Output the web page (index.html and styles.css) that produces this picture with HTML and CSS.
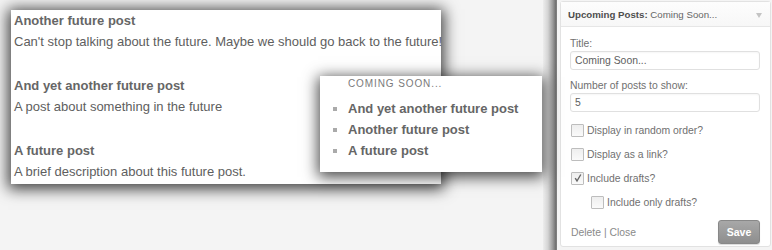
FILE: index.html
```html
<!DOCTYPE html>
<html>
<head>
<meta charset="utf-8">
<link rel="stylesheet" href="styles.css">
</head>
<body>
<div class="page">
  <div class="stage">
    <div class="posts">
      <div class="post">
        <div class="post-title">Another future post</div>
        <div class="post-desc">Can't stop talking about the future. Maybe we should go back to the future!</div>
      </div>
      <div class="post">
        <div class="post-title">And yet another future post</div>
        <div class="post-desc">A post about something in the future</div>
      </div>
      <div class="post">
        <div class="post-title">A future post</div>
        <div class="post-desc">A brief description about this future post.</div>
      </div>
    </div>
    <div class="soon">
      <div class="soon-head">COMING SOON...</div>
      <ul class="soon-list">
        <li>And yet another future post</li>
        <li>Another future post</li>
        <li>A future post</li>
      </ul>
    </div>
  </div>
  <div class="strip"></div>
  <div class="widget">
    <div class="widget-head">
      <span class="wh-text"><b>Upcoming Posts:</b> Coming Soon...</span>
      <span class="wh-arrow"></span>
    </div>
    <div class="widget-body">
      <div class="field-label">Title:</div>
      <div class="input">Coming Soon...</div>
      <div class="field-label second">Number of posts to show:</div>
      <div class="input">5</div>
      <div class="check-row first"><span class="cb"></span><span>Display in random order?</span></div>
      <div class="check-row"><span class="cb"></span><span>Display as a link?</span></div>
      <div class="check-row"><span class="cb checked"><svg width="10" height="10" viewBox="0 0 10 10"><path d="M2.2 5.2 L4 8 L7.8 1.5" fill="none" stroke="#666" stroke-width="1.4"/></svg></span><span>Include drafts?</span></div>
      <div class="check-row indent"><span class="cb"></span><span>Include only drafts?</span></div>
      <div class="footer">
        <span class="links">Delete | Close</span>
        <span class="save">Save</span>
      </div>
    </div>
  </div>
</div>
</body>
</html>
```
FILE: styles.css
```css
html, body {
  margin: 0;
  padding: 0;
}
body {
  background: #f4f4f4;
  font-family: "Liberation Sans", Arial, sans-serif;
  color: #555;
}
.page {
  display: flex;
  height: 250px;
  width: 772px;
  overflow: hidden;
  background: #f4f4f4;
}
.stage {
  position: relative;
  width: 543px;
  flex: none;
  padding: 10px 0 0 11px;
  box-sizing: border-box;
}
.posts {
  width: 430px;
  height: 174px;
  background: #fff;
  box-shadow: 0 2px 14px 3px rgba(0, 0, 0, 0.75);
  padding: 0 3px;
  box-sizing: border-box;
}
.post {
  margin-bottom: 23px;
}
.post-title {
  font-size: 13px;
  line-height: 21px;
  font-weight: bold;
  color: #666;
}
.post-desc {
  font-size: 13px;
  line-height: 21px;
  color: #5e5e5e;
  white-space: nowrap;
}
.soon {
  position: absolute;
  left: 320px;
  top: 76px;
  width: 222px;
  height: 96px;
  background: #fff;
  box-shadow: 0 3px 14px 2px rgba(0, 0, 0, 0.72);
  padding: 2px 0 0 28px;
  box-sizing: border-box;
}
.soon-head {
  font-size: 10px;
  line-height: 12px;
  letter-spacing: 0.9px;
  color: #7a7a7a;
  margin-bottom: 8px;
}
.soon-list {
  list-style: none;
  margin: 0;
  padding: 0;
}
.soon-list li {
  position: relative;
  font-size: 13px;
  line-height: 21px;
  font-weight: bold;
  color: #666;
}
.soon-list li::before {
  content: "";
  position: absolute;
  left: -15px;
  top: 9px;
  width: 4px;
  height: 4px;
  background: #aaa;
}
.strip {
  width: 14px;
  flex: none;
  background: linear-gradient(to right, #ededed 0%, #d4d4d4 35%, #9a9a9a 70%, #6e6e6e 92%, #8a8a8a 100%);
}
.widget {
  margin: 1px 0 0 3px;
  width: 211px;
  height: 246px;
  flex: none;
  background: #fff;
  border: 1px solid #e2e2e2;
  border-radius: 3px;
  box-sizing: border-box;
  font-size: 10.4px;
  color: #707070;
}
.widget-head {
  height: 24px;
  display: flex;
  align-items: center;
  justify-content: space-between;
  padding: 0 8px 0 7px;
  border-bottom: 1px solid #e6e6e6;
  background: linear-gradient(#fdfdfd, #f7f7f7);
  font-size: 9.7px;
  color: #666;
}
.wh-text b {
  color: #4e4e4e;
}
.wh-arrow {
  width: 0;
  height: 0;
  border-left: 3px solid transparent;
  border-right: 3px solid transparent;
  border-top: 5px solid #c4c4c4;
  margin-top: 2px;
}
.widget-body {
  padding: 10px 10px 0 9px;
}
.field-label {
  line-height: 14px;
}
.field-label.second {
  margin-top: 9px;
}
.input {
  height: 19px;
  border: 1px solid #e0e0e0;
  border-radius: 3px;
  box-sizing: border-box;
  padding: 0 4px;
  line-height: 17px;
  color: #5e5e5e;
  box-shadow: inset 0 1px 2px rgba(0, 0, 0, 0.04);
}
.check-row {
  height: 24px;
  display: flex;
  align-items: center;
  gap: 3px;
  padding-left: 1px;
}
.check-row.first {
  margin-top: 6px;
}
.check-row.indent {
  padding-left: 21px;
}
.cb {
  width: 11px;
  height: 11px;
  border: 1px solid #bdbdbd;
  background: linear-gradient(#eeeeee, #fafafa);
  border-radius: 1px;
  display: flex;
  align-items: center;
  justify-content: center;
  flex: none;
}
.cb svg {
  display: block;
}
.footer {
  margin-top: 6px;
  height: 24px;
  display: flex;
  align-items: center;
  justify-content: space-between;
  padding-left: 1px;
}
.links {
  color: #8a8a8a;
}
.save {
  width: 42px;
  height: 24px;
  box-sizing: border-box;
  display: flex;
  align-items: center;
  justify-content: center;
  background: linear-gradient(#a8a8a8, #8e8e8e);
  border: 1px solid #888;
  border-radius: 3px;
  color: #fff;
  font-weight: bold;
  font-size: 10.5px;
  box-shadow: 0 1px 1px rgba(0, 0, 0, 0.15);
}
```
